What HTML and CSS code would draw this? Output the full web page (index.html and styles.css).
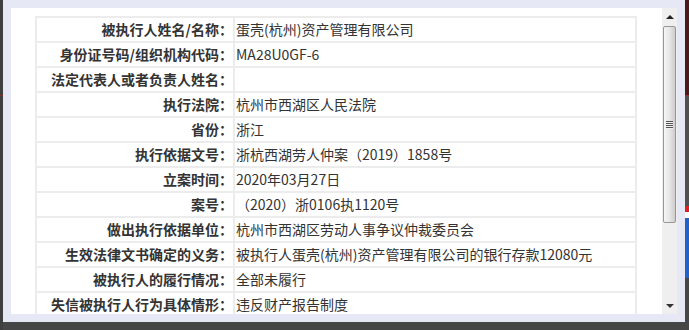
FILE: index.html
```html
<html>
  <head>
    <meta charset="utf-8">
    <link rel="stylesheet" href="styles.css">
    <title>失信被执行人详情</title>
  </head>
  <body>
    <div class="screen">
      <div class="edge-left">
        <span class="edge-line"></span>
      </div>

      <div class="dialog">
        <div class="dialog-body">
          <div class="viewport">
            <table class="info">
              <tr><th>被执行人姓名/名称：</th><td>蛋壳(杭州)资产管理有限公司</td></tr>
              <tr><th>身份证号码/组织机构代码：</th><td>MA28U0GF-6</td></tr>
              <tr><th>法定代表人或者负责人姓名：</th><td></td></tr>
              <tr><th>执行法院：</th><td>杭州市西湖区人民法院</td></tr>
              <tr><th>省份：</th><td>浙江</td></tr>
              <tr><th>执行依据文号：</th><td>浙杭西湖劳人仲案（2019）1858号</td></tr>
              <tr><th>立案时间：</th><td>2020年03月27日</td></tr>
              <tr><th>案号：</th><td>（2020）浙0106执1120号</td></tr>
              <tr><th>做出执行依据单位：</th><td>杭州市西湖区劳动人事争议仲裁委员会</td></tr>
              <tr><th>生效法律文书确定的义务：</th><td>被执行人蛋壳(杭州)资产管理有限公司的银行存款12080元</td></tr>
              <tr><th>被执行人的履行情况：</th><td>全部未履行</td></tr>
              <tr><th>失信被执行人行为具体情形：</th><td>违反财产报告制度</td></tr>
            </table>
          </div>

          <div class="scrollbar">
            <div class="sb-btn"><span class="arrow-up"></span></div>
            <div class="sb-thumb"><span class="grip"></span></div>
            <div class="sb-track"></div>
            <div class="sb-btn"><span class="arrow-down"></span></div>
          </div>
        </div>
      </div>

      <div class="edge-right">
        <div class="bg-header"></div>
        <div class="bg-rule"></div>
        <div class="bg-grey"></div>
        <div class="bg-red"></div>
        <div class="bg-blue"></div>
        <div class="bg-rest"></div>
      </div>
    </div>
  </body>
</html>
```

FILE: styles.css
```css
body {
  margin: 0;
  background: #464646;
  font-family: "Noto Sans CJK SC", "Liberation Sans", sans-serif;
  overflow: hidden;
}

.screen {
  display: flex;
  align-items: flex-start;
  width: 689px;
  height: 330px;
}

.edge-left {
  width: 3px;
  height: 330px;
  background: #3f3f3f;
  display: flex;
  flex-direction: column;
  padding-top: 95px;
  box-sizing: border-box;
}

.edge-line {
  height: 1px;
  background: #8a2a2a;
}

/* dialog box */
.dialog {
  width: 682px;
  height: 322px;
  box-sizing: border-box;
  border: 8px solid #e6e8f5;
  background: #fff;
}

.dialog-body {
  display: flex;
  height: 306px;
}

.viewport {
  flex: 1;
  overflow: hidden;
  padding: 8px 0 0 24px;
}

.info {
  width: 602px;
  border-spacing: 2px;
  background: #ececec;
  font-size: 14px;
  color: #333;
}

.info th,
.info td {
  background: #fff;
  line-height: 23px;
  height: 23px;
  padding: 0;
  white-space: nowrap;
}

.info th {
  width: 196px;
  text-align: right;
  font-weight: bold;
}

.info td {
  text-align: left;
  padding-left: 1px;
}

/* scrollbar */
.scrollbar {
  width: 15px;
  display: flex;
  flex-direction: column;
  background: #efefef;
}

.sb-btn {
  height: 18px;
  display: flex;
  justify-content: center;
  align-items: center;
}

.sb-btn:last-child {
  height: 17px;
}

.arrow-up {
  width: 0;
  height: 0;
  border-left: 4px solid transparent;
  border-right: 4px solid transparent;
  border-bottom: 4px solid #222;
}

.arrow-down {
  width: 0;
  height: 0;
  border-left: 4px solid transparent;
  border-right: 4px solid transparent;
  border-top: 4px solid #333;
}

.sb-thumb {
  height: 197px;
  margin: 0 1px;
  box-sizing: border-box;
  border: 1px solid #979797;
  border-radius: 2px;
  background: linear-gradient(to right, #f6f6f6, #e4e4e4 55%, #cdcdcd);
  display: flex;
  justify-content: center;
  align-items: center;
}

.grip {
  width: 7px;
  height: 8px;
  background: repeating-linear-gradient(to bottom, #555 0, #555 1px, #f0f0f0 1px, #f0f0f0 2px);
}

.sb-track {
  flex: 1;
}

/* page behind the dialog */
.edge-right {
  flex: 1;
  height: 330px;
  display: flex;
  flex-direction: column;
}

.bg-header {
  height: 95px;
  background: #4c1a1a;
}

.bg-rule {
  height: 1px;
  background: #a02828;
}

.bg-grey {
  height: 110px;
  background: #505050;
}

.bg-red {
  height: 12px;
  background: linear-gradient(to bottom, #e02020 50%, #fff 50%);
}

.bg-blue {
  height: 60px;
  background: #2262c6;
}

.bg-rest {
  flex: 1;
  background: #464646;
}
```
